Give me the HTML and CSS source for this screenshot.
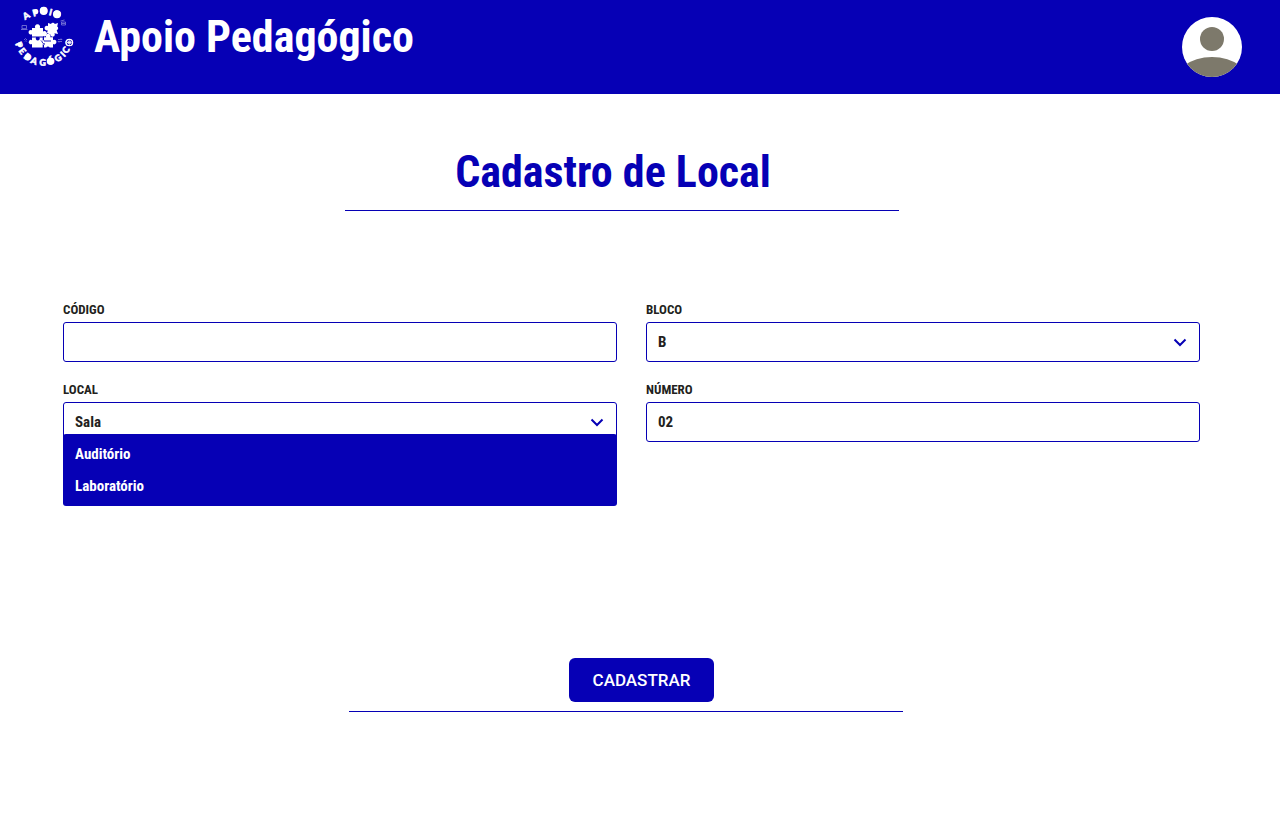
FILE: index.html
```html
<!DOCTYPE html>
<html lang="pt-BR">
<head>
<meta charset="utf-8">
<meta name="viewport" content="width=device-width, initial-scale=1">
<title>Cadastro de Local</title>
<link rel="stylesheet" href="styles.css">
</head>
<body>
<header class="topbar">
  <div class="brand">
    <svg class="logo" viewBox="12 5 64 64" role="img" aria-label="Logo">
      <text class="logo-text" x="25 33.4 40.1 48.6 52.3" y="20 16.4 14.2 14.9 15.3" rotate="-30 -15 0 15 28">APOIO</text>
      <text class="logo-text" x="14.9 18.2 23 30.1 39.2 47.8 56.9 64.3 67.1 71.6" y="43.8 51.1 57.4 62.8 65.5 65.3 62.6 57.6 54.3 46.7" rotate="65 52 38 21 3 -14 -32 -45 -58 -78">PEDAGÓGICO</text>
      <g fill="#fff">
        <circle cx="43.7" cy="11" r="3.9"/><circle cx="57" cy="14.2" r="4"/>
        <circle cx="50.5" cy="61.3" r="3.5"/><circle cx="27.7" cy="57" r="3"/>
        <circle cx="35.8" cy="12" r="2.4"/><circle cx="19.2" cy="44.6" r="2.1"/>
        <path d="M32 28h3.2a2.6 2.6 0 1 1 4.6 0H43v3.6a2.6 2.6 0 1 1 0 4.4v.5H32v-2.3a2.3 2.3 0 1 1 0-4z"/>
        <path d="M32 37.5h4a2 2 0 1 0 3.5 0h3.2v3a2.2 2.2 0 1 1 0 3.8v3.2H32V44a2.2 2.2 0 1 1 0-3.8z"/>
        <path d="M44 37.3h2.2a2.3 2.3 0 1 1 4 0H53v2.8a2.3 2.3 0 1 1 0 4v3.4h-3.3a2 2 0 0 0-3.5 0H44V45a3.2 3.2 0 0 0 0-5z"/>
        <path d="M48 23l3 1a2.1 2.1 0 0 1 3.8.1L58 23l-.8 3.5a2.1 2.1 0 0 1-.5 3.8L58 34l-3.600-.8a2.2 2.2 0 1 1-4 1.2L47 33l.8-2.8a2.3 2.3 0 1 1 .2-4.1z"/>
      </g>
      <path d="M41 40.5c2 1.5 1 3.5 4 3.5M44 41h7" stroke="#0600b5" stroke-width=".9" fill="none"/>
      <g class="logo-faint" fill="none" stroke="#fff" stroke-width=".8">
        <path d="M22 25.5h4.500v3.2H22zM21 29.500h6.500"/>
        <path d="M61.500 22h4v3h-4zM60.500 21l4-1M62 23.500h3"/>
        <path d="M24 40l1.500-1.500L27 40M25 41.500l.8-.8.8.8M58 39.500h4l-1-1M62 41.500h-4l1 1"/>
      </g>
      <circle cx="69.300" cy="42.500" r="3.200" fill="#0600b5" stroke="#fff" stroke-width="1.300"/>
      <path d="M67 42.500h4.600M69.300 40.200v4.600M67.800 41l3 3M70.800 41l-3 3" stroke="#fff" stroke-width=".9"/>
    </svg>
    <p class="brand-name">Apoio Pedagógico</p>
  </div>
  <button class="avatar" type="button" aria-label="Perfil">
    <svg viewBox="0 0 60 60" aria-hidden="true">
      <defs><clipPath id="avatar-clip"><circle cx="30" cy="30" r="30"/></clipPath></defs>
      <circle cx="30" cy="30" r="30" fill="#fff"/>
      <g fill="#7d796b" clip-path="url(#avatar-clip)"><circle cx="30" cy="22" r="12"/><ellipse cx="30" cy="70" rx="40" ry="30"/></g>
    </svg>
  </button>
</header>
<main>
  <div class="heading-row">
    <div class="heading"><h1>Cadastro de Local</h1></div>
  </div>
  <form>
    <div class="fields">
      <div class="field">
        <label for="codigo">CÓDIGO</label>
        <input class="control" id="codigo" type="text">
      </div>
      <div class="field">
        <label for="bloco">BLOCO</label>
        <div class="picker">
          <select class="control" id="bloco"><option>B</option></select>
          <svg class="chevron" viewBox="0 0 14 10" aria-hidden="true"><path d="M1.500 1.500L7 7l5.500-5.500"/></svg>
        </div>
      </div>
      <div class="field">
        <label for="local">LOCAL</label>
        <div class="picker">
          <select class="control" id="local"><option>Sala</option></select>
          <svg class="chevron" viewBox="0 0 14 10" aria-hidden="true"><path d="M1.500 1.500L7 7l5.500-5.500"/></svg>
          <ul class="menu" role="listbox" aria-label="Local">
            <li role="option">Auditório</li>
            <li role="option">Laboratório</li>
          </ul>
        </div>
      </div>
      <div class="field">
        <label for="numero">NÚMERO</label>
        <input class="control" id="numero" type="text" value="02">
      </div>
    </div>
    <div class="actions-row">
      <div class="actions"><button class="submit" type="submit">CADASTRAR</button></div>
    </div>
  </form>
</main>
</body>
</html>
```
FILE: styles.css
```css
:root {
  --blue: #0600b5;
  --ink: #231f20;
  --display: "Roboto Condensed", "Liberation Sans Narrow", "DejaVu Sans Condensed", sans-serif;
}
* { box-sizing: border-box; }
body {
  margin: 0;
  background: #fff;
  color: var(--ink);
  font-family: var(--display);
  font-weight: 700;
}
.topbar {
  display: flex;
  justify-content: space-between;
  align-items: center;
  min-height: 94px;
  padding: 0 38px 0 12px;
  background: var(--blue);
  color: #fff;
}
.brand {
  display: flex;
  align-items: center;
  gap: 18px;
  padding-bottom: 20px;
}
.logo { width: 64px; height: 64px; }
.logo-text {
  font: 900 9px Lato, sans-serif;
  fill: #fff;
  stroke: #fff;
  stroke-width: 0.5;
}
.logo-faint { opacity: 0.5; }
.brand-name { margin: 0; font-size: 44px; line-height: 56px; }
.avatar {
  width: 60px;
  height: 60px;
  padding: 0;
  border: 0;
  border-radius: 50%;
  background: none;
}
.avatar svg { display: block; }
main { padding: 50px 80px 0 63px; }
.heading-row { padding-right: 19px; }
.heading {
  max-width: 554px;
  margin: 0 auto;
  border-bottom: 1px solid var(--blue);
}
.heading h1 {
  margin: 0;
  padding: 0 18px 10px 0;
  font-size: 44px;
  line-height: 56px;
  text-align: center;
  color: var(--blue);
}
.fields {
  display: grid;
  grid-template-columns: 1fr 1fr;
  gap: 20px 29px;
  margin-top: 91px;
}
.field { display: flex; flex-direction: column; gap: 4px; }
.field label { font-size: 13px; line-height: 16px; }
.control {
  display: block;
  width: 100%;
  height: 40px;
  padding: 0 11px;
  border: 1px solid var(--blue);
  border-radius: 3px;
  background: #fff;
  color: var(--ink);
  font: 700 15px var(--display);
  appearance: none;
}
.picker { position: relative; }
.chevron {
  position: absolute;
  top: 16px;
  right: 13px;
  width: 14px;
  height: 10px;
  fill: none;
  stroke: var(--blue);
  stroke-width: 2;
  pointer-events: none;
}
.menu {
  position: absolute;
  top: 32px;
  left: 0;
  right: 0;
  margin: 0;
  padding: 4px 12px;
  border-radius: 3px;
  background: var(--blue);
  color: #fff;
  font-size: 15px;
  line-height: 32px;
  list-style: none;
}
.actions-row { margin-top: 216px; padding-right: 11px; }
.actions {
  max-width: 554px;
  margin: 0 auto;
  padding: 0 0 9px 31px;
  border-bottom: 1px solid var(--blue);
  text-align: center;
}
.submit {
  height: 44px;
  padding: 0 24px;
  border: 0;
  border-radius: 6px;
  background: var(--blue);
  color: #fff;
  font: 500 17px Roboto, sans-serif;
}
```
